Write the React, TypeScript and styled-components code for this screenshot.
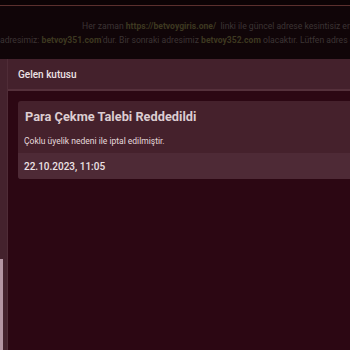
import React from "react";
import styled, { createGlobalStyle } from "styled-components";

const Global = createGlobalStyle`
  html, body { margin: 0; padding: 0; background: #100508; overflow: hidden; }
  body { font-family: Roboto, "Liberation Sans", sans-serif; width: 350px; height: 350px; }
`;

const Page = styled.div`
  width: 350px;
  height: 350px;
  display: flex;
  flex-direction: column;
  overflow: hidden;
  background: #100508;
`;

const TopStrip = styled.div`
  height: 5px;
  background: #0c0305;
  border-bottom: 1px solid #5b302e;
  flex: none;
`;

const Notice = styled.div`
  height: 53px;
  flex: none;
  display: flex;
  flex-direction: column;
  padding-top: 15px;
  box-sizing: border-box;
  gap: 4px;
  font-size: 8.6px;
  color: #3c3434;
  white-space: nowrap;
`;

const NoticeLine = styled.div<{ $indent: number }>`
  margin-left: ${(p) => p.$indent}px;
  line-height: 10px;
`;

const Link = styled.span`
  color: #3d3820;
  font-weight: 700;
`;

const Panel = styled.div`
  flex: 1;
  display: flex;
  min-height: 0;
`;

const Side = styled.div`
  width: 8px;
  flex: none;
  background: #44222d;
  border-right: 1px solid #4f2c37;
  box-sizing: border-box;
  display: flex;
  flex-direction: column;
  justify-content: flex-end;
`;

const Thumb = styled.div`
  width: 3px;
  height: 91px;
  background: #b596a4;
`;

const Main = styled.div`
  flex: 1;
  display: flex;
  flex-direction: column;
  background: #2c0713;
`;

const Header = styled.div`
  height: 32px;
  flex: none;
  box-sizing: border-box;
  background: #44212c;
  border-bottom: 2px solid #55303b;
  display: flex;
  align-items: center;
  padding-left: 10px;
  font-size: 10px;
  font-weight: 500;
  color: #ece2e5;
`;

const Content = styled.div`
  padding: 10px 0 0 10px;
`;

const Card = styled.div`
  width: 340px;
  background: #45212c;
  border-radius: 3px 0 0 3px;
  overflow: hidden;
`;

const Title = styled.div`
  padding: 7px 7px 0;
  font-size: 12.8px;
  font-weight: 700;
  color: #dccdd1;
  line-height: 18px;
`;

const Message = styled.div`
  padding: 9px 6px 0;
  font-size: 8.5px;
  color: #e6dadd;
  line-height: 12px;
  height: 27px;
  box-sizing: border-box;
`;

const DateRow = styled.div`
  background: #4e2a36;
  height: 26px;
  display: flex;
  align-items: center;
  padding: 1px 0 0 6px;
  box-sizing: border-box;
  font-size: 10px;
  font-weight: 500;
  color: #ece2e5;
`;

export default function App() {
  return (
    <>
      <Global />
      <Page>
        <TopStrip />
        <Notice>
          <NoticeLine $indent={82}>
            Her zaman <Link>https://betvoygiris.one/</Link>&nbsp; linki ile güncel adrese kesintisiz erişim sağlayabilirsiniz.
          </NoticeLine>
          <NoticeLine $indent={0}>
            adresimiz: <Link>betvoy351.com</Link>'dur. Bir sonraki adresimiz <Link>betvoy352.com</Link> olacaktır. Lütfen adres güncellemelerini takip ediniz.
          </NoticeLine>
        </Notice>
        <Panel>
          <Side>
            <Thumb />
          </Side>
          <Main>
            <Header>Gelen kutusu</Header>
            <Content>
              <Card>
                <Title>Para Çekme Talebi Reddedildi</Title>
                <Message>Çoklu üyelik nedeni ile iptal edilmiştir.</Message>
                <DateRow>22.10.2023, 11:05</DateRow>
              </Card>
            </Content>
          </Main>
        </Panel>
      </Page>
    </>
  );
}
